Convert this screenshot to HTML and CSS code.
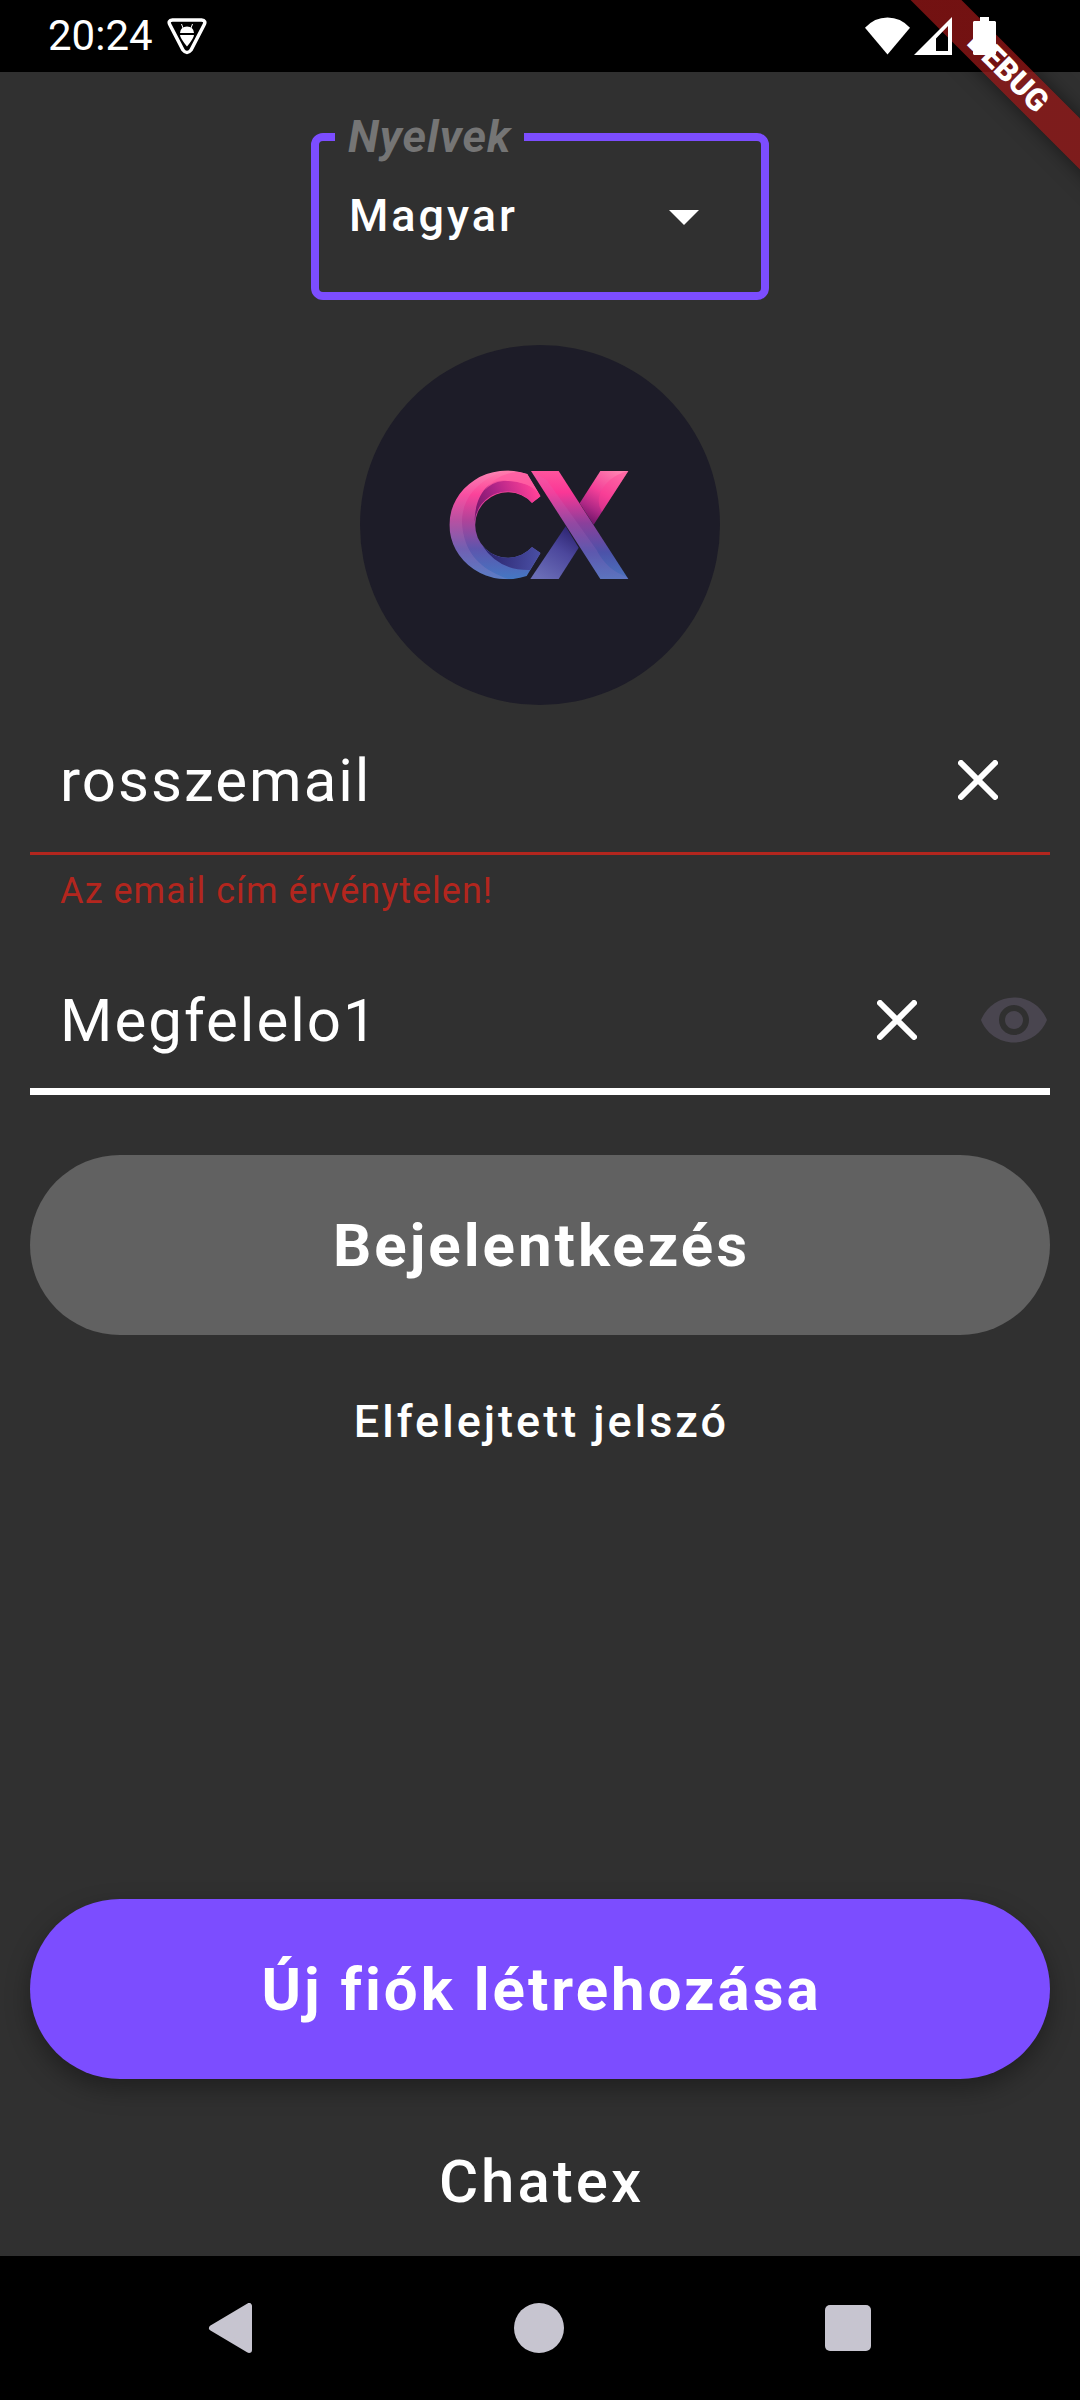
FILE: index.html
```html
<!DOCTYPE html>
<html lang="hu">
<head>
<meta charset="utf-8">
<meta name="viewport" content="width=device-width, initial-scale=1">
<title>Chatex</title>
<link rel="stylesheet" href="styles.css">
</head>
<body>
<div class="screen">
  <div class="banner-clip"><div class="banner">DEBUG</div></div>

  <header class="status">
    <div class="status-group">
      <time class="clock">20:24</time>
      <svg class="bug" viewBox="0 0 40 37" aria-hidden="true">
        <path d="M5.500 2H34.500Q39.500 2.500 37 7L24 32Q20 37 16 32L3 7Q.5 2.500 5.500 2Z" fill="none" stroke="#fff" stroke-width="3.500"/>
        <path d="M13 15Q13.500 8.500 20 8.500T27 15ZM13 17H27Q27 20 20 28.500 13 20 13 17Z" fill="#fff"/>
        <path d="M16 10L14.500 6M24 10L25.500 6" stroke="#fff" stroke-width="1"/>
      </svg>
    </div>
    <div class="status-group status-icons">
      <svg class="wifi" viewBox="0 0 46 38" aria-hidden="true"><path d="M0 10.500Q9.500 0 23 0T46 10.500L23 38Z" fill="#fff"/></svg>
      <svg class="signal" viewBox="0 0 38 38" aria-hidden="true"><path fill-rule="evenodd" d="M38 0V38H0ZM34 9L22 21.500V34H34Z" fill="#fff"/></svg>
      <svg class="battery" viewBox="0 0 23 38" aria-hidden="true"><path d="M7 0H16V4H22L23 5V37L22 38H1L0 37V5L1 4H7Z" fill="#fff"/></svg>
    </div>
  </header>

  <main class="login">
    <fieldset class="language">
      <legend><label for="language">Nyelvek</label></legend>
      <div class="language-row">
        <select id="language"><option>Magyar</option><option>English</option></select>
        <svg class="caret" viewBox="0 0 30 15" aria-hidden="true"><path d="M0 0H30L15 15Z" fill="#fff"/></svg>
      </div>
    </fieldset>

    <svg class="avatar" viewBox="-210 -315 1080 1080" role="img" aria-label="CX">
      <defs>
        <linearGradient id="main" x1="0" y1="62" x2="0" y2="388" gradientUnits="userSpaceOnUse">
          <stop offset="0" stop-color="#ff7fae"/><stop offset=".22" stop-color="#fb429a"/><stop offset=".45" stop-color="#b24399"/><stop offset=".72" stop-color="#5d55ad"/><stop offset="1" stop-color="#4478c3"/>
        </linearGradient>
        <linearGradient id="stroke" x1="0" y1="62" x2="0" y2="388" gradientUnits="userSpaceOnUse">
          <stop offset="0" stop-color="#ff559d"/><stop offset=".2" stop-color="#fa3796"/><stop offset=".48" stop-color="#8c3f9b"/><stop offset=".75" stop-color="#4c52a9"/><stop offset="1" stop-color="#4b73bd"/>
        </linearGradient>
        <linearGradient id="innerTop" x1="136" y1="190" x2="310" y2="110" gradientUnits="userSpaceOnUse">
          <stop offset="0" stop-color="#741669"/><stop offset=".45" stop-color="#b02488"/><stop offset="1" stop-color="#ff4097"/>
        </linearGradient>
        <linearGradient id="innerBottom" x1="165" y1="305" x2="330" y2="330" gradientUnits="userSpaceOnUse">
          <stop offset="0" stop-color="#29236a"/><stop offset="1" stop-color="#4a4fa5"/>
        </linearGradient>
        <linearGradient id="backTop" x1="560" y1="62" x2="470" y2="215" gradientUnits="userSpaceOnUse">
          <stop offset="0" stop-color="#ff82b0"/><stop offset=".45" stop-color="#f33f98"/><stop offset=".75" stop-color="#b02886"/><stop offset="1" stop-color="#6c1468"/>
        </linearGradient>
        <linearGradient id="backBottom" x1="430" y1="245" x2="340" y2="388" gradientUnits="userSpaceOnUse">
          <stop offset="0" stop-color="#2f2674"/><stop offset=".4" stop-color="#4c479c"/><stop offset="1" stop-color="#6a6db7"/>
        </linearGradient>
        <clipPath id="letterC"><path d="M332 139L306 159A98 98 0 1 0 306 291L332 309 290 378A173 163 0 1 1 292 72Z"/></clipPath>
      </defs>
      <circle cx="330" cy="225" r="540" fill="#1d1c28"/>
      <g clip-path="url(#letterC)">
        <path fill="url(#main)" d="M50 50H340V400H50Z"/>
        <path fill="url(#innerTop)" d="M134 215C134 140 175 82 232 93 268 94 296 104 318 119L332 139 306 159A98 98 0 0 0 134 215Z"/>
        <path fill="#ff5ba0" d="M262 65Q280 66 292 72L326 128Q282 88 220 93 184 96 164 122 196 74 262 65Z" opacity=".75"/>
        <path fill="url(#innerBottom)" d="M158 288Q210 344 280 310L306 291 332 309 300 360Q206 362 158 288Z"/>
        <path fill="#e9a0d6" opacity=".14" d="M232 60C130 92 90 160 97 230 106 320 165 365 245 390H50V60Z"/>
      </g>
      <path fill="url(#backTop)" d="M511 63H595L491 224 449 160Z"/>
      <path fill="#ff3f94" opacity=".4" d="M595 63L516 185Q500 160 510 132 530 80 595 63Z"/>
      <path fill="url(#backBottom)" d="M407 229L446 293 386 387H301Z"/>
      <path fill="url(#stroke)" d="M303 63H386L595 387H511Z"/>
      <path fill="#c883cf" opacity=".14" d="M303 63L350 90 500 300Q530 360 590 380L595 387H511Z"/>
    </svg>

    <form class="form">
      <div class="field field-error">
        <input type="text" value="rosszemail" aria-label="Email" aria-invalid="true" aria-describedby="email-error">
        <button class="icon-button clear-email" type="button" aria-label="Törlés">
          <svg viewBox="0 0 40 40"><path d="M3 3L37 37M37 3L3 37" stroke="#fff" stroke-width="6" stroke-linecap="round"/></svg>
        </button>
      </div>
      <p class="error" id="email-error">Az email cím érvénytelen!</p>
      <div class="field field-focus">
        <input type="text" value="Megfelelo1" aria-label="Jelszó">
        <button class="icon-button" type="button" aria-label="Törlés">
          <svg viewBox="0 0 40 40"><path d="M3 3L37 37M37 3L3 37" stroke="#fff" stroke-width="6" stroke-linecap="round"/></svg>
        </button>
        <button class="icon-button reveal" type="button" aria-label="Jelszó megjelenítése">
          <svg viewBox="0 0 24 24"><path fill="#49454f" d="M12 4.500C7 4.500 2.730 7.610 1 12c1.730 4.390 6 7.500 11 7.500s9.270-3.110 11-7.500c-1.730-4.390-6-7.500-11-7.500zM12 17c-2.760 0-5-2.240-5-5s2.240-5 5-5 5 2.240 5 5-2.240 5-5 5zm0-8c-1.660 0-3 1.340-3 3s1.340 3 3 3 3-1.340 3-3-1.340-3-3-3z"/></svg>
        </button>
      </div>
      <button class="pill pill-muted" type="submit">Bejelentkezés</button>
      <button class="forgot" type="button">Elfelejtett jelszó</button>
    </form>

    <div class="bottom">
      <button class="pill pill-accent" type="button">Új fiók létrehozása</button>
      <p class="brand">Chatex</p>
    </div>
  </main>

  <nav class="navbar" aria-label="Rendszer">
    <button type="button" aria-label="Vissza"><svg viewBox="0 0 50 50"><path d="M44 3V47L7 25Z" fill="#c7c5d0" stroke="#c7c5d0" stroke-width="6" stroke-linejoin="round"/></svg></button>
    <button type="button" aria-label="Kezdőlap"><svg viewBox="0 0 50 50"><circle cx="25" cy="25" r="25" fill="#c7c5d0"/></svg></button>
    <button type="button" aria-label="Áttekintés"><svg viewBox="0 0 50 50"><rect x="2" y="2" width="46" height="46" rx="5" fill="#c7c5d0"/></svg></button>
  </nav>
</div>
</body>
</html>
```
FILE: styles.css
```css
* {
  box-sizing: border-box;
}

body {
  margin: 0;
  background: #303030;
  color: #fff;
  font-family: Roboto, "Liberation Sans", sans-serif;
}

button,
input,
select {
  margin: 0;
  padding: 0;
  border: 0;
  outline: 0;
  background: none;
  color: inherit;
  font: inherit;
}

svg {
  display: block;
}

.screen {
  position: relative;
  display: flex;
  flex-direction: column;
  min-height: 100vh;
}

/* Status bar */
.status {
  display: flex;
  justify-content: space-between;
  align-items: center;
  height: 72px;
  padding: 0 84px 0 48px;
  background: #000;
}

.status-group {
  display: flex;
  align-items: center;
  gap: 14px;
}

.clock {
  font-size: 42px;
  line-height: 72px;
}

.bug {
  width: 40px;
  height: 37px;
}

.status-icons {
  position: relative;
  z-index: 2;
  gap: 4px;
}

.wifi {
  width: 45px;
  height: 38px;
}

.signal {
  width: 38px;
  height: 38px;
}

.battery {
  width: 23px;
  height: 38px;
  margin-left: 17px;
}

/* Corner ribbon */
.banner-clip {
  position: absolute;
  top: 0;
  right: 0;
  z-index: 1;
  width: 240px;
  height: 240px;
  overflow: hidden;
  pointer-events: none;
}

.banner {
  position: absolute;
  top: 54px;
  right: -128px;
  width: 400px;
  height: 36px;
  background: linear-gradient(rgba(183, 28, 28, 0.627), rgba(183, 28, 28, 0.627)), rgba(0, 0, 0, 0.4);
  box-shadow: 0 0 20px rgba(0, 0, 0, 0.5);
  font-size: 31px;
  font-weight: 900;
  line-height: 36px;
  text-align: center;
  transform: rotate(45deg);
}

/* Login */
.login {
  display: flex;
  flex: 1;
  flex-direction: column;
  align-items: center;
  padding: 38px 30px 0;
}

.language {
  width: 458px;
  max-width: 100%;
  margin: 0;
  padding: 0 16px 26px;
  border: 8px solid #7c4dff;
  border-radius: 12px;
}

.language legend {
  padding: 0 13px;
  color: #757575;
  font-size: 45px;
  font-style: italic;
  font-weight: 700;
  line-height: 54px;
  letter-spacing: 1px;
}

.language-row {
  display: grid;
  align-items: center;
  padding: 0 13px 0 14px;
}

.language-row > * {
  grid-area: 1 / 1;
}

.language select {
  width: 100%;
  height: 102px;
  appearance: none;
  font-size: 45px;
  font-weight: 500;
  letter-spacing: 3px;
}

.language option {
  color: #303030;
}

.caret {
  justify-self: end;
  width: 30px;
  height: 15px;
  margin: 4px 33px 0 0;
  pointer-events: none;
}

.avatar {
  width: 360px;
  height: 360px;
  margin-top: 45px;
}

.form {
  display: flex;
  flex-direction: column;
  align-self: stretch;
}

.field {
  display: flex;
  align-items: center;
  height: 150px;
  padding-left: 30px;
}

.field-error {
  box-shadow: inset 0 -3px #b3261e;
}

.field-focus {
  box-shadow: inset 0 -7px #fff;
}

.field input {
  flex: 1;
  min-width: 0;
  height: 72px;
  font-size: 60px;
  letter-spacing: 2px;
}

.icon-button {
  display: grid;
  place-items: center;
  width: 80px;
  height: 80px;
}

.icon-button svg {
  width: 40px;
  height: 40px;
}

.clear-email {
  margin-right: 32px;
}

.reveal {
  width: 72px;
  margin-left: 41px;
}

.reveal svg {
  width: 72px;
  height: 72px;
}

.error {
  height: 90px;
  margin: 0;
  padding: 15px 30px 0;
  color: #b3261e;
  font-size: 36px;
  line-height: 42px;
  letter-spacing: 1px;
}

.pill,
.forgot,
.brand {
  letter-spacing: 3px;
  text-indent: 3px;
}

.pill {
  width: 100%;
  height: 180px;
  border-radius: 90px;
  font-size: 60px;
  font-weight: 700;
}

.pill-muted {
  margin-top: 60px;
  background: #616161;
}

.pill-accent {
  background: #7c4dff;
  box-shadow: 0 10px 24px rgba(0, 0, 0, 0.35);
}

.forgot {
  align-self: center;
  margin-top: 60px;
  font-size: 45px;
  font-weight: 500;
  line-height: 54px;
}

.bottom {
  align-self: stretch;
  margin-top: auto;
  text-align: center;
}

.brand {
  margin: 0;
  padding: 68px 0 39px;
  font-size: 60px;
  font-weight: 500;
  line-height: 70px;
}

/* System navigation */
.navbar {
  display: flex;
  justify-content: center;
  gap: 259px;
  height: 144px;
  padding-right: 2px;
  background: #000;
}

.navbar button,
.navbar svg {
  width: 50px;
}
```
